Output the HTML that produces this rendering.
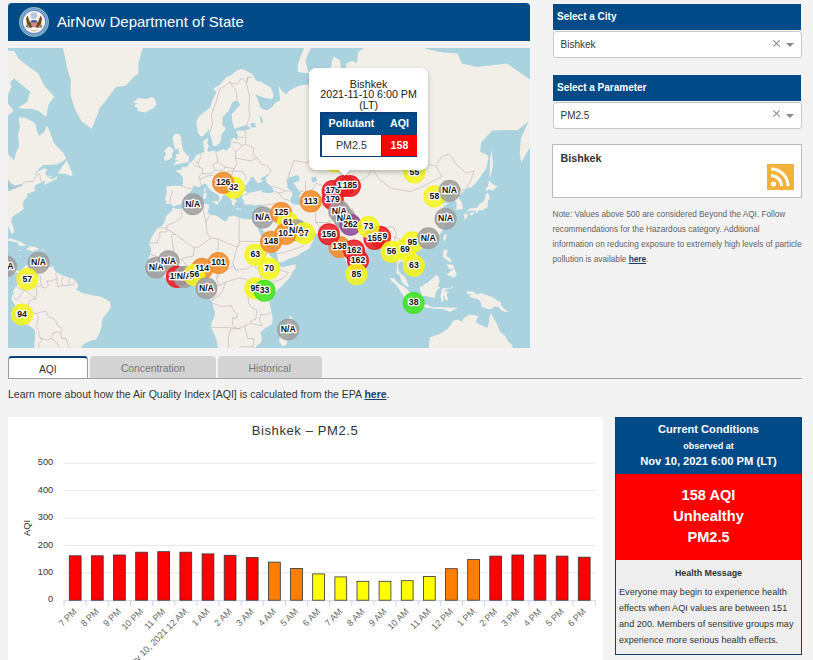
<!DOCTYPE html>
<html><head><meta charset="utf-8">
<style>
*{box-sizing:border-box}
html,body{margin:0;padding:0}
body{width:813px;height:660px;overflow:hidden;position:relative;background:#f3f3f3;font-family:"Liberation Sans",sans-serif;color:#333}
.abs{position:absolute}
#hdr{left:8px;top:3px;width:522px;height:38px;background:#004b87;border-radius:4px 4px 0 0}
#hdr .t{position:absolute;left:49px;top:10px;font-size:15px;color:#fff;white-space:nowrap}
#map{left:8px;top:48px;width:522px;height:300px;overflow:hidden;background:#aad3df}
#map svg{position:absolute;left:-8px;top:-48px}
.mk text{font:bold 8.7px "Liberation Sans",sans-serif;fill:#111;text-anchor:middle;paint-order:stroke;stroke:#fff;stroke-width:2.6px;stroke-linejoin:round}
#popup{left:309px;top:67.5px;width:119px;height:102px;background:#fff;border-radius:7px;box-shadow:0 2px 5px rgba(0,0,0,.25);text-align:center;font-size:9.8px;line-height:10.8px;color:#222}
#popup .tip{position:absolute;left:27px;top:100px;width:14px;height:14px;background:#fff;transform:rotate(45deg);box-shadow:2px 2px 3px rgba(0,0,0,.15)}
#popup table{position:absolute;left:11px;top:44.5px;width:97px;border-collapse:collapse;border:1.5px solid #0b3f7a}
#popup th{background:#004b87;color:#fff;font-weight:bold;height:22px;padding:0;font-size:9.8px}
#popup td{height:23px;padding:0;font-size:9.8px}
.selh{left:553px;width:248px;height:26px;background:#004b87;color:#fff;font-weight:bold;font-size:10px;padding:7px 0 0 4px;white-space:nowrap}
.sel{left:553px;width:249px;height:27px;background:#fff;border:1px solid #c8c8c8;border-radius:3px;font-size:10px;color:#333;padding:7px 0 0 6.5px}
.sel .x{position:absolute;left:218px;top:6.7px}
.sel .ar{position:absolute;left:232px;top:11px;width:0;height:0;border-left:4px solid transparent;border-right:4px solid transparent;border-top:4px solid #888}
#cityb{left:552px;top:144px;width:250px;height:54px;background:#fff;border:1px solid #bbb}
#note{left:552.5px;top:207px;width:252px;font-size:8.25px;line-height:15px;color:#626262}
#note b,#learn b{color:#1a3d6a;text-decoration:underline}
.tab{top:356px;height:23px;border-radius:4px 4px 0 0;text-align:center;font-size:10.3px;padding-top:7px}
#learn{left:8px;top:387.5px;font-size:10.5px;color:#333;white-space:nowrap}
#chart{left:8px;top:417px;width:595px;height:250px;background:#fff}
#chart svg{position:absolute;left:-8px;top:-417px}
.yl{font:9.2px "Liberation Sans",sans-serif;fill:#333}
.xl{font:9px "Liberation Sans",sans-serif;fill:#666}
#cc{left:615px;top:417px;width:187px;height:238px;border:1px solid #0b3f7a;background:#eee}
#cc .h{position:absolute;left:0;top:0;width:185px;height:56px;background:#004b87;color:#fff;font-weight:bold;text-align:center}
#cc .r{position:absolute;left:0;top:56px;width:185px;height:86px;background:#ff0000;color:#fff;font-weight:bold;text-align:center;font-size:14.6px;line-height:21.2px;padding-top:10.5px}
</style></head><body>
<div id="hdr" class="abs">
 <svg class="abs" style="left:10px;top:2.5px" width="32" height="32" viewBox="0 0 32 32">
  <circle cx="16" cy="16" r="15" fill="#5a86c4"/>
  <circle cx="16" cy="16" r="14.4" fill="none" stroke="#8fc7a8" stroke-width="1"/>
  <circle cx="16" cy="16" r="12.6" fill="none" stroke="#88a8d8" stroke-width="1.2"/>
  <circle cx="16" cy="16" r="11" fill="#f7f5ee"/>
  <circle cx="16" cy="9.6" r="3.4" fill="#b4c8dc"/>
  <path d="M15 19 L11.5 15 L9.5 9.5 L8 12.5 L9 18 L12 22 L15 21 Z" fill="#6f4c26"/>
  <path d="M17 19 L20.5 15 L22.5 9.5 L24 12.5 L23 18 L20 22 L17 21 Z" fill="#6f4c26"/>
  <path d="M9 18 L7.5 21 L11 22 Z" fill="#70844a"/>
  <path d="M23 18 L24.5 21 L21 22 Z" fill="#8a7a5a"/>
  <path d="M13.3 14.2 H18.7 V19.5 Q16 23 13.3 19.5 Z" fill="#d98a84"/>
  <rect x="13.3" y="14.2" width="5.4" height="2.3" fill="#3d5a9c"/>
  <path d="M12.5 24 Q16 26 19.5 24" fill="none" stroke="#c9b98a" stroke-width="1"/>
 </svg>
 <div class="t">AirNow Department of State</div>
</div>
<div id="map" class="abs">
<svg width="813" height="660" viewBox="0 0 813 660">
<g fill="#f2efe9"><polygon points="174.1,206.7 172.1,205.6 170.6,203.7 166.3,204.3 166.5,201.8 165.2,199.6 165.4,197.7 166.9,192.7 166.7,189.8 165.6,187.8 167.6,186.3 173.3,185.8 177.4,186.1 182.2,186.0 183.0,182.7 183.0,177.8 180.8,174.4 175.9,170.9 179.1,169.6 181.3,170.1 182.1,166.8 185.8,167.3 187.9,166.0 189.5,162.4 191.8,161.6 194.3,159.0 195.7,155.5 199.5,153.9 204.2,152.1 203.7,146.2 203.1,141.1 208.3,137.6 207.4,143.6 208.9,146.1 207.3,149.9 208.9,151.9 211.5,151.1 213.6,150.6 216.6,152.1 219.0,151.0 223.3,148.9 225.5,150.4 228.4,149.1 230.8,145.4 230.5,142.3 231.7,138.8 234.0,137.4 237.2,140.5 238.0,134.7 235.9,131.4 238.6,130.4 246.0,130.6 250.5,128.2 247.0,125.0 238.9,127.3 234.7,128.9 233.3,126.1 232.3,121.5 231.8,114.1 235.0,110.5 240.2,104.8 237.3,100.4 233.0,101.7 230.5,106.0 228.9,110.7 223.9,115.5 222.6,117.4 222.3,125.1 225.8,128.0 224.3,130.9 221.5,134.7 220.7,141.7 219.0,143.6 216.4,145.7 213.4,146.1 212.8,144.0 211.2,137.6 209.5,132.7 208.6,128.5 207.0,132.3 202.7,135.9 200.7,136.4 197.8,132.4 196.9,126.3 196.3,121.5 198.7,117.0 202.0,114.1 205.9,110.7 210.2,107.4 212.3,100.6 216.4,92.6 213.4,88.6 219.8,85.1 222.8,81.6 226.2,77.3 230.5,75.4 236.3,70.9 240.8,68.9 245.5,70.2 252.2,74.3 256.5,81.0 260.8,81.8 270.8,87.5 273.8,95.3 272.3,99.1 264.8,98.0 259.0,95.9 255.0,93.4 257.3,98.5 259.7,105.0 260.1,107.3 263.8,109.7 267.2,110.2 272.3,107.0 275.5,102.2 280.2,100.4 278.3,84.9 282.0,91.5 286.2,94.2 289.9,90.3 299.1,85.7 309.8,84.0 314.1,77.9 327.0,82.8 329.1,73.5 333.4,56.4 339.8,60.0 341.5,70.2 343.0,88.6 346.2,63.5 352.7,60.7 357.0,63.5 358.0,52.6 371.9,40.8 389.1,23.1 408.4,13.1 425.5,48.8 442.7,52.6 457.6,53.4 461.9,63.5 476.9,66.9 506.9,63.5 530.5,79.8 549.8,77.9 571.2,88.6 571.2,119.2 549.8,128.0 534.8,136.4 528.4,121.5 517.6,130.2 508.6,129.9 492.4,130.6 481.2,142.3 480.1,151.7 487.0,154.8 488.5,158.1 486.0,169.1 475.9,183.0 470.3,188.0 468.1,187.2 463.6,190.9 458.8,196.5 458.6,198.4 461.7,202.2 462.8,206.9 462.8,208.2 461.9,209.3 456.4,210.1 456.8,203.0 454.1,199.6 452.1,196.3 447.4,194.1 446.1,199.1 444.8,196.6 446.9,194.4 441.8,196.2 437.9,198.8 440.3,201.6 442.4,203.7 445.6,202.8 448.2,203.2 443.5,206.8 441.5,210.2 443.7,213.4 444.8,217.3 446.7,219.3 446.7,222.5 444.1,227.2 441.6,231.9 438.6,235.6 435.6,238.2 430.2,240.7 423.4,242.5 422.1,243.2 421.9,245.3 420.6,242.5 419.3,242.5 414.2,244.0 412.0,248.9 413.9,251.8 417.4,254.9 419.5,263.3 419.1,264.7 415.0,267.4 410.1,271.2 410.1,267.5 407.3,266.9 405.2,263.4 401.7,261.8 400.9,260.5 399.7,262.6 398.1,267.1 398.3,270.0 401.1,274.2 402.5,275.0 404.6,276.6 407.0,281.6 409.0,286.7 407.9,286.9 404.6,285.0 402.8,283.3 400.4,278.1 399.8,275.5 396.4,272.7 396.8,268.3 396.8,262.8 395.9,259.2 394.7,253.8 391.7,253.2 387.4,255.0 387.6,249.4 384.6,245.6 382.6,242.6 382.2,240.7 379.4,241.1 376.9,241.8 374.3,242.3 371.2,245.3 369.5,246.4 364.0,251.2 359.4,254.5 357.2,258.5 357.6,261.4 356.6,267.5 355.5,269.7 353.0,270.8 351.7,272.3 350.4,271.4 348.9,268.3 348.0,265.4 345.9,261.8 343.7,256.1 342.6,252.7 341.5,248.2 341.5,243.3 340.1,241.9 337.7,244.4 336.3,243.9 334.7,242.3 333.4,240.8 336.0,239.3 333.2,237.9 330.2,236.7 329.1,234.7 322.7,233.6 319.0,234.1 315.4,233.6 309.4,232.8 306.1,229.2 301.2,230.1 297.0,227.7 294.5,224.9 292.7,222.3 289.5,222.4 288.4,223.7 290.5,228.4 292.9,231.0 293.9,233.2 295.2,231.7 296.1,233.6 294.8,235.3 298.0,236.2 302.1,235.5 304.0,233.8 305.4,232.5 306.4,231.0 306.3,234.1 307.0,235.9 310.7,237.6 313.7,240.2 310.9,244.8 309.2,248.2 305.5,250.7 301.5,252.7 297.4,255.9 290.7,258.3 282.0,262.0 278.5,262.5 278.2,260.9 277.6,257.6 276.7,253.0 273.4,247.1 269.5,242.5 267.1,236.5 262.0,228.7 260.5,223.5 259.0,227.4 255.6,223.5 255.3,222.4 254.8,219.0 259.4,218.5 260.1,217.0 260.5,215.2 261.6,212.4 262.4,211.0 262.3,208.2 263.1,205.3 259.7,204.8 254.1,205.6 251.3,204.5 246.2,204.7 244.3,204.3 243.6,200.3 241.7,197.4 242.1,195.9 242.8,194.9 241.0,193.7 237.8,193.5 237.0,196.0 234.7,194.4 235.9,197.4 234.4,198.8 237.0,201.0 237.0,202.5 236.3,201.7 234.4,202.8 234.9,205.1 233.8,205.9 232.0,204.5 232.0,200.9 230.0,199.0 228.8,197.2 227.3,194.8 227.2,192.4 226.5,190.1 224.3,188.5 220.8,186.0 218.1,184.2 216.4,180.6 215.2,182.0 215.0,179.5 211.9,180.3 212.4,184.4 214.5,185.7 216.0,189.1 220.3,190.7 221.8,192.9 224.0,194.2 225.2,195.6 224.9,196.6 222.4,194.8 222.2,198.5 221.1,199.4 220.0,201.7 219.1,201.3 219.4,197.4 219.0,196.0 217.2,194.2 216.1,193.7 214.6,192.7 211.9,191.2 208.0,187.8 207.6,186.0 206.5,184.2 204.6,183.3 201.2,185.4 198.3,187.2 197.1,186.6 193.9,185.8 192.0,188.3 192.6,189.5 190.2,192.1 187.5,194.1 184.8,197.6 184.5,200.6 183.4,202.6 180.3,204.8 176.1,205.1"/><polygon points="173.3,165.4 178.1,164.0 188.3,161.9 189.2,156.7 186.2,153.9 182.8,149.5 182.1,145.7 181.1,139.7 181.7,138.0 179.1,133.9 174.8,133.9 172.3,138.4 173.6,143.1 175.1,149.5 178.5,148.8 179.1,153.9 175.7,154.2 176.6,157.8 174.2,159.2 179.1,160.9 175.9,161.6"/><polygon points="169.7,146.5 173.6,149.9 172.2,154.0 171.8,158.1 167.3,160.2 164.6,160.7 163.7,158.1 166.3,154.2 164.1,151.0 167.8,147.3"/><polygon points="214.2,201.3 212.3,201.6 212.1,202.1 216.0,204.0 217.9,205.1 218.3,202.9 218.9,201.0"/><polygon points="203.5,192.9 205.9,192.7 206.5,194.6 206.1,198.3 203.5,199.1 203.5,194.6"/><polygon points="205.7,187.5 206.0,190.1 205.3,192.1 204.0,190.9 204.0,189.2"/><polygon points="235.9,208.2 241.9,208.9 241.3,209.6 238.0,209.6 235.9,209.0"/><polygon points="254.8,209.6 259.7,208.0 258.4,209.8 256.3,210.6"/><polygon points="357.0,268.6 359.6,271.2 360.8,274.7 358.2,277.0 357.4,276.7 356.6,274.9 356.5,272.3"/><polygon points="446.0,233.6 446.7,236.7 444.4,241.6 443.1,239.0 444.1,235.5"/><polygon points="421.2,245.7 423.4,246.9 420.2,250.0 418.2,247.8"/><polygon points="489.1,180.3 491.9,183.6 497.5,186.6 492.5,190.7 488.7,188.9 487.0,191.1 485.5,188.9 487.6,186.9"/><polygon points="487.4,192.7 488.9,194.9 489.8,198.3 487.9,200.9 487.3,207.7 485.1,208.8 483.8,209.0 482.9,210.6 478.9,209.8 476.5,213.6 475.2,210.6 469.3,211.1 466.0,212.3 468.1,210.3 470.5,208.2 476.9,207.9 479.1,204.3 483.4,201.8 485.5,196.9 485.5,194.1"/><polygon points="469.4,213.4 474.1,211.6 473.1,214.2 470.5,215.5"/><polygon points="464.9,213.2 467.5,214.1 467.1,217.5 465.3,219.8 464.5,218.3 463.8,215.4"/><polygon points="491.3,150.2 492.6,158.8 493.0,165.6 491.1,173.8 490.9,178.4 489.6,175.3 490.0,160.5"/><polygon points="534.8,119.2 528.4,121.5 520.9,138.4 519.8,153.5 521.2,162.6 525.5,155.3 528.4,149.9 534.8,142.3 533.7,136.4 539.1,128.0"/><polygon points="443.9,249.4 447.4,249.4 447.4,252.3 446.1,255.6 451.2,259.8 451.2,262.5 449.1,261.6 446.3,259.4 444.7,258.1 443.9,258.7 442.7,255.0 443.3,252.7"/><polygon points="446.9,274.7 450.4,271.2 454.6,268.6 456.6,274.7 454.2,277.7 451.6,276.8"/><polygon points="446.7,264.0 453.4,264.9 454.4,268.2 450.1,269.7 448.0,267.1"/><polygon points="436.0,274.7 438.6,277.1 439.7,280.6 437.9,286.5 440.5,287.6 437.3,289.7 435.8,292.4 434.7,298.1 431.1,297.2 427.7,296.6 421.9,295.9 421.2,291.8 419.7,289.7 420.4,285.6 422.0,286.4 424.0,284.6 427.7,282.8 429.8,280.3 431.9,279.0 434.3,276.9"/><polygon points="389.7,277.8 394.4,278.5 397.0,282.0 399.8,284.3 402.9,286.1 406.2,288.6 409.4,291.8 412.7,296.1 412.2,302.4 409.4,302.4 404.6,297.8 400.5,291.7 397.2,285.9 391.4,280.8"/><polygon points="410.9,304.3 412.4,302.6 414.4,302.8 418.1,304.1 422.1,304.6 427.1,304.5 430.7,306.5 430.7,308.2 425.5,307.5 422.3,307.1 413.7,305.6"/><polygon points="430.9,307.3 440.5,307.1 449.1,307.5 453.6,307.8 458.3,307.8 453.4,310.1 450.1,312.1 442.7,309.1 434.1,308.8 431.3,308.6"/><polygon points="441.6,290.8 442.7,288.0 449.1,288.4 453.0,286.5 453.4,288.0 445.9,289.5 444.1,291.6 449.7,291.6 446.7,293.6 448.0,300.4 444.8,299.4 444.8,295.5 443.3,295.9 443.7,301.5 441.4,301.5 440.5,296.6"/><polygon points="466.2,292.5 466.8,291.6 472.9,291.5 476.9,294.4 480.8,292.9 487.0,295.2 493.0,297.2 497.9,300.9 501.6,302.6 500.5,304.1 503.1,308.0 508.0,311.9 504.8,311.9 500.9,310.0 498.4,307.1 494.1,306.5 491.9,309.1 487.6,309.3 486.4,308.0 482.3,307.5 480.8,302.6 478.9,299.6 473.7,298.3 469.0,295.9 471.6,294.6 468.4,294.2"/><polygon points="490.9,312.8 493.0,317.1 495.1,320.7 496.7,323.3 497.9,326.4 500.1,331.7 505.2,336.1 508.0,341.3 512.0,344.7 513.6,350.8 514.4,369.8 431.9,369.8 429.0,344.8 429.8,337.6 439.7,334.1 447.4,328.9 450.4,325.3 453.4,320.7 457.6,319.6 461.9,321.8 464.3,317.8 465.9,316.6 469.6,314.5 478.6,316.0 476.7,319.1 475.9,322.2 483.4,326.2 487.3,327.8 488.9,322.2 489.5,317.0"/><polygon points="291.1,315.5 293.7,323.3 291.4,329.3 288.0,339.2 286.2,345.0 282.4,346.2 279.1,341.2 280.5,334.1 280.9,326.7 284.7,323.8 288.4,318.9"/><polygon points="173.1,207.5 170.9,212.2 169.3,213.2 165.7,216.5 165.0,221.3 161.8,226.1 157.9,227.3 156.6,229.3 151.4,237.4 149.0,244.1 150.6,247.1 151.3,250.3 150.2,255.0 148.1,257.9 150.0,260.6 149.8,262.9 152.1,264.1 154.5,266.4 156.2,269.3 157.2,271.4 160.9,274.7 162.4,276.2 169.5,280.4 177.0,278.3 181.1,279.5 185.1,277.8 188.2,276.5 192.8,275.9 196.3,277.7 198.4,280.5 200.5,280.3 203.3,279.2 206.3,281.1 206.5,285.7 205.8,288.8 204.4,291.2 207.0,296.1 210.9,300.0 212.0,302.8 213.9,308.6 215.1,313.4 214.3,316.9 211.6,322.7 210.8,327.3 214.5,334.6 216.6,340.2 218.0,349.0 220.8,353.7 255.4,352.2 255.4,347.3 261.4,342.3 261.6,335.7 260.2,333.1 264.6,328.6 271.0,324.9 272.7,321.2 272.3,315.6 271.7,311.9 269.8,304.3 269.3,300.6 270.5,298.4 271.5,296.6 274.5,293.6 276.7,290.4 282.7,285.3 286.2,281.1 289.5,278.2 292.2,272.5 294.4,269.3 295.7,267.3 295.4,264.2 291.0,265.3 286.2,266.2 282.0,267.2 278.0,264.7 278.3,262.9 277.0,261.6 274.5,258.3 270.1,255.9 268.0,250.5 265.3,246.9 263.8,242.5 261.6,236.7 258.0,229.0 255.3,222.4 254.8,219.0 253.7,218.8 249.6,219.3 243.8,218.9 236.9,217.0 234.0,215.4 228.5,217.0 226.3,221.5 221.1,219.3 217.9,216.3 213.8,215.0 211.5,214.9 207.2,212.4 208.6,210.2 208.7,207.6 209.2,204.1 207.4,204.8 206.7,203.5 202.2,204.5 200.3,204.5 196.5,204.9 192.1,204.9 188.3,205.6 184.3,207.7 179.3,209.0 177.2,208.9 174.1,208.0"/><polygon points="-28.7,-9.4 -7.3,49.6 14.2,51.1 18.5,58.5 29.1,66.9 38.6,73.8 44.1,85.7 54.4,96.4 48.4,104.8 46.3,116.9 38.8,111.0 31.3,108.8 21.6,108.8 18.4,107.3 27.0,102.2 30.2,91.5 22.7,85.7 14.2,78.5 5.6,85.7 1.3,94.2 1.3,128.0 8.8,155.3 14.2,160.5 16.3,151.7 19.0,146.9 18.2,134.5 19.9,128.0 18.6,117.4 24.9,117.8 31.3,121.0 35.6,123.7 36.6,130.2 39.0,135.9 44.1,132.3 46.3,126.7 47.6,126.3 51.6,136.4 53.4,142.1 56.6,146.3 63.4,152.8 66.2,158.5 63.2,160.9 57.0,164.6 43.3,165.0 39.5,168.3 33.4,175.3 35.6,173.8 38.8,170.7 44.1,168.6 47.4,169.4 45.2,172.2 46.3,175.3 48.4,177.5 52.7,179.4 57.0,176.3 57.4,178.4 49.3,182.6 43.9,185.0 45.2,180.6 47.4,180.6 44.0,180.7 42.0,182.1 35.0,185.5 34.1,188.6 35.6,190.9 32.4,192.1 27.0,194.1 27.0,196.9 25.1,199.0 23.8,200.2 22.7,204.3 23.8,208.9 21.6,210.6 18.6,212.4 14.4,215.2 12.0,217.3 11.2,221.5 12.9,226.1 14.2,230.3 13.7,232.5 11.6,234.1 10.1,230.5 8.6,227.3 7.7,224.5 5.6,222.3 -7.3,222.3 -28.7,222.3"/><polygon points="57.6,173.4 66.6,160.2 72.6,173.8 70.9,176.3 65.6,173.8"/><polygon points="50.6,175.6 52.7,177.2 47.6,176.6"/><polygon points="29.1,13.1 142.7,-36.9 147.0,32.2 138.4,63.5 138.4,73.5 134.1,76.7 125.6,85.7 115.9,86.9 105.0,101.7 99.9,107.3 95.6,119.2 91.5,129.1 88.1,125.9 81.6,121.5 74.8,108.8 72.0,99.6 70.5,94.5 70.9,79.8 67.7,70.2 65.1,57.8 61.3,40.8 44.1,27.7 29.1,13.1"/><polygon points="138.6,109.0 134.1,105.8 137.3,103.2 133.1,102.2 138.4,98.0 146.8,99.1 151.3,96.9 154.5,98.5 156.6,104.3 153.4,108.3 144.8,112.6 136.9,110.7"/><polygon points="3.5,241.7 9.0,238.7 11.6,238.6 19.5,241.4 26.7,245.4 23.1,246.1 19.1,246.3 17.4,242.5 13.1,241.8 9.9,240.9 5.6,241.4"/><polygon points="26.0,249.5 29.6,246.2 35.6,246.9 39.2,249.1 32.6,251.4 29.1,250.0"/><polygon points="17.7,249.9 22.3,250.3 20.6,250.9"/><polygon points="41.6,249.6 45.0,249.8 44.6,250.5 41.6,250.5"/><polygon points="-7.3,246.0 -0.8,242.5 -1.9,250.5 -4.1,255.4 5.6,255.2 7.1,257.2 6.2,266.2 7.7,268.2 9.4,269.6 14.4,269.6 15.2,270.3 19.7,271.0 21.2,272.3 23.8,267.3 25.3,266.0 26.6,265.4 31.4,262.8 32.1,265.5 35.6,263.4 39.9,267.1 42.2,266.9 48.0,267.2 52.7,266.6 55.3,271.2 61.0,275.1 67.3,277.1 73.5,279.1 75.6,280.7 78.4,285.4 76.2,289.6 81.6,292.8 90.6,295.1 97.7,295.9 103.1,297.6 110.1,302.1 110.8,307.0 109.1,310.5 103.1,317.7 101.9,321.8 101.9,325.4 100.7,328.9 99.2,334.1 95.6,340.1 93.0,340.1 86.2,342.6 81.6,346.2 81.6,352.2 33.9,352.2 33.9,350.1 34.5,346.0 34.7,341.9 35.3,333.9 34.9,330.0 29.8,326.0 24.4,323.1 22.3,319.3 20.4,315.7 16.2,307.1 14.5,304.2 11.4,299.6 12.2,294.4 14.4,294.4 12.7,291.7 14.9,287.7 16.7,285.8 20.4,281.3 19.7,275.7 17.4,272.5 14.2,273.6 12.0,272.5 5.6,270.3 1.3,266.0 -7.3,260.5"/><polygon points="298.0,72.2 297.6,66.9 299.1,60.0 302.3,52.6 305.5,44.9 309.8,36.6 318.4,30.4 331.2,23.1 333.4,27.7 322.7,35.7 314.1,42.4 308.7,52.6 305.5,60.0 307.7,70.2 310.9,73.5 303.4,72.8"/><polygon points="310.9,74.8 315.2,76.7 312.0,78.5"/><polygon points="-0.8,102.2 5.6,100.1 10.9,107.3 13.7,111.2 7.7,115.5 1.3,111.2"/><polygon points="-7.3,73.5 1.3,76.7 9.9,79.8 11.4,86.9 6.7,96.9 1.3,98.5 -7.3,99.6"/></g>
<g fill="#aad3df"><polygon points="247.8,192.7 244.5,188.9 245.3,186.9 246.9,183.9 249.2,180.9 251.3,176.9 253.7,176.9 255.2,180.3 257.3,182.7 259.0,183.3 261.6,181.5 263.8,180.4 261.6,180.3 260.5,178.4 267.0,174.7 269.5,174.7 265.9,177.5 266.5,182.4 270.6,185.7 274.7,191.4 270.6,193.2 263.3,192.4 260.9,190.3 253.7,191.9 249.0,192.7"/><polygon points="288.2,179.1 289.5,177.2 292.7,176.6 296.7,175.0 299.1,176.0 299.3,180.6 293.3,183.0 295.2,185.5 298.5,190.4 301.2,193.2 299.1,196.0 301.0,199.4 301.2,203.5 301.0,204.5 294.8,204.8 291.6,202.9 290.2,199.5 292.5,194.9 291.6,191.8 287.3,187.5 287.3,183.0 286.2,181.5"/><polygon points="242.8,194.9 247.7,192.9 248.8,194.1 244.5,195.2"/><polygon points="249.8,123.7 255.2,122.8 255.6,127.2 251.3,127.6"/><polygon points="259.5,116.0 261.6,116.9 263.1,122.3 261.0,123.2"/><polygon points="310.9,177.8 316.2,176.6 316.9,180.9 313.0,183.0"/><polygon points="343.0,176.6 354.8,176.9 353.7,178.4 344.1,178.8"/><polygon points="408.4,159.9 411.6,157.8 420.2,145.4 421.2,146.5 414.4,157.1 409.4,160.9"/><polygon points="8.8,191.2 16.3,187.8 22.3,186.0 22.1,183.9 15.2,185.7 8.8,181.5 5.6,178.4 5.6,191.8"/><polygon points="253.7,291.8 258.4,292.3 258.0,295.1 254.1,295.9"/></g>
<g fill="none" stroke="#a8949f" stroke-opacity="0.55" stroke-width="0.75" stroke-linejoin="round"><polyline points="6.7,177.8 9.0,180.6 8.8,187.5 16.3,188.0 15.9,186.3 21.6,184.5 25.5,181.5 32.4,181.5 34.9,178.8 37.3,174.1 39.9,174.2 40.3,179.4 42.0,182.1"/><polyline points="19.7,271.0 18.6,274.2 20.1,272.7"/><polyline points="32.8,264.2 30.4,266.0 30.2,271.4 30.4,273.8 35.6,274.7 40.9,276.4 40.3,280.0 41.4,284.3 40.3,285.4 36.0,287.3 36.9,292.3 35.6,298.7 29.6,300.9 28.1,305.4 27.0,305.8 29.1,309.9 34.5,313.4 36.6,313.4"/><polyline points="57.0,271.4 55.5,274.0 57.0,278.5 51.0,281.1 46.9,280.9 48.4,285.4 45.2,288.0 42.0,287.1 41.4,284.3"/><polyline points="63.0,276.8 63.0,277.9 61.3,281.1 62.4,285.4 58.1,286.9 57.4,284.3 57.0,278.5"/><polyline points="69.9,277.5 68.8,281.1 69.9,285.0 65.8,285.6 62.4,285.4"/><polyline points="75.0,280.7 73.1,284.6 69.9,285.0"/><polyline points="13.5,297.0 16.3,300.4 19.5,296.8 24.2,289.9 19.7,288.8 16.7,286.7"/><polyline points="24.2,289.9 28.1,292.3 35.6,298.7"/><polyline points="36.6,313.4 38.4,316.7 37.1,323.3 36.6,327.8 38.8,331.2 39.4,336.9 42.0,340.4 38.8,343.9 38.6,352.2"/><polyline points="36.6,313.4 45.6,310.8 48.4,316.7 53.8,318.9 56.6,322.2 57.0,325.1 60.9,327.3 61.9,329.4 60.9,333.4 61.5,338.3 66.0,338.7 68.6,346.5 70.3,350.1 66.2,352.2"/><polyline points="40.1,338.0 47.6,339.9 51.4,338.5 53.4,332.5 59.1,331.9 60.9,333.4"/><polyline points="51.4,338.5 57.0,342.7 60.9,350.5"/><polyline points="181.8,209.3 181.7,217.0 177.6,220.0 174.2,222.5 166.9,225.5 166.9,227.9 157.3,227.9"/><polyline points="166.9,227.9 166.9,232.0 159.8,232.0 159.8,238.1 157.5,239.5 157.7,243.0 149.1,243.0"/><polyline points="166.9,228.9 175.3,234.4 171.6,234.4 173.8,253.8 173.8,256.1 161.1,256.3 159.4,257.6 150.4,254.3"/><polyline points="175.3,234.4 188.1,243.7 194.1,247.8 198.0,247.3 211.0,237.9"/><polyline points="203.5,204.5 203.3,210.9 205.9,221.8 207.0,233.6 211.0,237.9"/><polyline points="210.2,214.2 205.9,221.8"/><polyline points="211.0,237.9 217.7,239.0 237.0,247.1"/><polyline points="239.3,218.3 239.1,241.4 264.6,241.4"/><polyline points="239.1,241.4 239.1,246.0 237.0,246.0 237.0,247.1 234.0,259.4 232.7,262.7 235.9,270.3 232.7,266.0 226.3,270.3 219.8,273.6 216.6,279.0 219.8,285.4 225.4,282.2 234.6,279.4 239.1,277.9 244.3,279.0 247.7,280.3 251.5,282.2 252.4,281.6 257.3,281.6 261.6,279.0 258.4,268.6 259.0,266.9 263.8,258.7 268.0,250.5"/><polyline points="235.9,270.3 241.3,269.3 247.7,268.8 254.1,263.8 256.3,268.2 258.4,268.6"/><polyline points="217.7,239.0 218.8,246.0 214.7,260.1 216.6,263.8 219.0,268.2 216.6,279.0"/><polyline points="193.3,264.5 200.5,260.5 207.0,261.2 214.7,260.1"/><polyline points="193.3,264.5 191.5,270.3 191.3,276.2"/><polyline points="194.1,247.8 193.3,256.1 186.0,257.4 181.3,259.0 179.1,260.3 176.1,262.7 173.8,267.3 168.4,267.7 167.3,273.2 169.5,280.3"/><polyline points="181.3,259.0 187.5,266.0 188.5,269.5 189.0,276.4"/><polyline points="179.1,266.0 179.8,270.3 178.7,278.5"/><polyline points="159.4,257.6 160.9,262.9 156.2,262.3 153.4,262.3 149.8,262.9"/><polyline points="160.9,262.9 167.3,265.1 168.4,267.7 162.6,270.3 160.9,274.7"/><polyline points="157.5,262.5 149.6,260.3"/><polyline points="203.8,280.0 204.8,276.8 210.2,274.7 214.7,267.7 216.6,263.8"/><polyline points="206.5,285.0 209.8,285.0 219.8,285.4"/><polyline points="209.8,285.0 209.8,287.6 205.9,287.6 209.8,287.6 216.6,294.8 211.7,300.4"/><polyline points="211.7,301.5 213.4,299.6 219.8,295.1 223.0,289.7 225.4,282.2"/><polyline points="211.7,302.6 220.9,306.5 231.6,305.8 232.5,309.5 237.0,313.4 237.0,317.8 232.7,317.8 232.7,325.1 235.7,328.0"/><polyline points="210.8,327.3 225.2,327.6 235.7,328.0 239.8,328.5 244.5,325.8 250.7,323.5 250.7,320.7 255.8,319.3 256.9,310.1 251.3,307.3 248.5,302.6 248.1,296.1 249.0,292.7 251.5,291.8 258.2,291.8 258.4,287.6 260.5,280.0"/><polyline points="258.2,291.8 266.1,297.0 269.5,299.8"/><polyline points="273.4,281.1 273.4,293.3"/><polyline points="273.4,281.1 275.5,281.1 282.0,279.0 288.4,272.5 278.3,269.5 277.2,266.0"/><polyline points="263.8,258.7 268.0,251.6 277.7,261.8"/><polyline points="272.1,312.3 265.9,314.7 260.5,314.5 259.5,320.0 262.3,325.8 250.7,323.5"/><polyline points="228.4,338.0 228.4,352.2"/><polyline points="228.4,338.0 230.5,329.1 239.8,328.5"/><polyline points="244.5,325.8 247.7,338.5 254.1,338.7 252.6,346.7"/><polyline points="256.0,349.6 252.6,346.7 240.2,346.9 234.8,352.2"/><polyline points="263.1,205.3 275.5,203.7 281.5,203.7 283.0,207.2 284.1,214.7 288.0,217.8 289.5,222.5"/><polyline points="275.5,203.7 273.8,210.9 269.1,217.3 264.4,216.5 262.0,215.5"/><polyline points="269.1,217.3 275.5,219.5 281.3,224.2 287.3,224.7"/><polyline points="263.8,223.5 264.8,221.0 269.1,217.3"/><polyline points="277.2,253.8 285.2,252.1 297.0,248.2 303.4,246.0 304.9,241.4 304.5,237.4 306.2,234.6"/><polyline points="294.8,235.3 303.4,239.7 304.9,241.4"/><polyline points="281.5,196.9 284.1,199.1 288.4,200.2 290.3,200.5"/><polyline points="301.0,203.5 307.7,201.6 313.0,202.9 316.2,205.6 316.7,208.0 315.2,212.9 315.8,222.5 319.5,226.4 320.5,230.5 317.5,233.9"/><polyline points="315.8,222.5 328.0,222.5 334.5,218.5 337.7,212.2 339.0,205.6 345.2,204.3"/><polyline points="316.7,208.0 322.7,204.0 330.8,203.7 336.6,200.5 338.7,204.3 345.2,204.3"/><polyline points="331.7,237.4 337.7,235.5 337.7,228.4 345.2,219.8 346.9,216.0 345.2,210.9 352.2,208.2"/><polyline points="352.2,208.2 354.8,214.7 359.1,221.8 365.5,225.7 374.3,227.4 382.7,227.7 393.4,226.7"/><polyline points="374.3,230.8 377.9,232.0 383.7,234.4 383.3,243.7"/><polyline points="393.4,226.7 396.6,234.4 394.4,236.7 403.0,240.9 407.3,239.7 414.2,240.2 416.9,242.5"/><polyline points="403.0,240.9 400.0,245.0 403.0,250.7 411.2,255.2 410.7,258.7 404.9,260.3 406.0,264.2"/><polyline points="403.0,240.9 404.3,242.5 408.4,246.0 412.2,251.6 415.9,257.6 412.7,267.1"/><polyline points="394.4,236.7 395.5,244.8 398.3,250.5 396.6,255.0 398.7,266.0"/><polyline points="287.3,180.0 293.7,160.5 303.4,162.3 316.2,162.9 316.2,152.4 333.4,146.5 349.5,151.7 357.0,162.9 365.5,162.9 371.9,168.6"/><polyline points="371.9,168.6 382.7,162.9 395.5,158.8 404.1,164.6 416.9,167.6 429.8,164.6 435.6,166.0"/><polyline points="371.9,168.6 379.4,179.4 391.2,188.3 410.5,191.5 423.4,186.3 430.9,182.1 442.2,176.6 435.6,166.0"/><polyline points="435.6,166.0 442.2,156.4 449.1,153.9 457.6,165.6 466.2,173.1 474.1,171.2 470.5,181.5 466.2,187.5 465.4,188.9"/><polyline points="465.4,188.9 459.8,190.4 455.5,193.2 452.1,196.3"/><polyline points="371.9,168.6 368.7,175.3 362.3,180.0 357.6,181.5 357.4,189.8 346.2,194.6 343.0,197.4 345.2,204.3"/><polyline points="305.5,181.5 305.5,192.4 312.0,189.5 316.2,183.3 322.7,185.7 328.0,190.4 333.4,192.1 337.7,188.0 344.1,186.9 357.4,189.8"/><polyline points="299.1,190.4 305.5,192.4"/><polyline points="312.0,189.5 317.3,193.2 323.7,198.8 328.0,203.2"/><polyline points="181.7,186.4 192.4,189.1"/><polyline points="170.6,190.4 172.3,191.5 170.6,196.9 169.7,203.7"/><polyline points="191.0,161.9 194.5,165.6 199.3,167.3 203.1,168.9 201.8,173.4 198.6,177.5 200.5,178.8 199.7,181.2 201.6,185.1"/><polyline points="194.5,160.9 198.0,162.9 198.6,165.3 199.3,167.3"/><polyline points="200.5,154.2 200.1,158.8 198.4,163.3"/><polyline points="201.8,173.4 208.0,173.8 212.3,173.1 213.4,171.2 215.5,170.2 221.8,170.2 222.2,172.8 220.9,176.9"/><polyline points="200.5,178.8 208.0,176.0 212.3,175.3 214.9,176.9 214.7,180.0"/><polyline points="205.0,148.8 204.0,148.4"/><polyline points="216.0,152.1 216.8,156.7 217.7,162.3 212.3,164.6 215.5,170.2"/><polyline points="217.7,162.3 225.8,167.3 234.0,168.6 237.0,164.0 235.3,157.8 235.9,151.7 231.6,146.9"/><polyline points="221.8,170.2 225.8,167.3"/><polyline points="222.2,172.8 233.1,170.9 234.0,168.6"/><polyline points="233.1,170.9 242.3,171.5 246.0,177.2 246.0,180.0"/><polyline points="220.9,176.9 225.8,178.8 230.5,177.5 233.1,170.9"/><polyline points="230.5,177.5 234.2,182.7 239.1,185.4 246.6,185.4"/><polyline points="234.2,182.7 233.5,189.5 234.6,192.4 241.9,191.2 245.5,190.4"/><polyline points="226.7,180.6 227.1,184.5 227.5,186.9 228.8,188.9 230.5,189.8 233.5,189.5"/><polyline points="214.7,180.0 219.2,177.5 220.9,176.9"/><polyline points="219.2,177.5 218.8,180.6 222.0,180.9 226.7,180.6"/><polyline points="228.4,188.6 229.7,192.9 230.3,195.2 228.4,196.9"/><polyline points="230.3,195.2 234.8,192.4 241.3,193.2 242.1,190.9 245.5,190.4"/><polyline points="235.9,151.7 242.5,145.4 245.5,144.2 246.0,138.4 244.9,130.6"/><polyline points="230.5,142.3 237.0,142.7 242.5,145.4"/><polyline points="237.6,136.8 244.5,138.0"/><polyline points="245.5,144.2 253.7,148.0 253.0,155.3 257.3,157.8 261.6,164.3 267.4,166.0 271.2,171.5 267.6,175.0"/><polyline points="235.3,157.8 241.3,159.2 251.1,160.9 257.3,157.8"/><polyline points="246.0,125.9 249.8,116.9 248.8,108.8 249.8,96.9 247.7,88.6 246.6,82.8 247.7,77.3"/><polyline points="210.0,132.3 212.3,123.7 211.3,114.5 216.0,102.2 219.8,88.6 225.8,85.7 229.5,82.2"/><polyline points="237.0,100.6 236.1,90.3 229.5,82.2 237.0,84.6 241.3,77.9 246.6,82.8 247.7,77.3 251.5,77.9"/><polyline points="271.7,186.0 278.7,188.0 285.2,190.9 289.5,190.9"/><polyline points="274.7,191.5 278.7,192.9 282.0,192.7 285.2,190.9"/><polyline points="281.5,196.9 279.0,193.5 278.7,192.9"/><polyline points="174.1,206.5 174.1,206.7"/></g>
<g class="mk"><circle cx="335" cy="161.5" r="10.4" fill="#f4f41c" fill-opacity="0.86" stroke="#f4f41c" stroke-opacity="0.9" stroke-width="1.3"/><circle cx="6" cy="266.5" r="10.4" fill="#9e9e9e" fill-opacity="0.86" stroke="#9e9e9e" stroke-opacity="0.9" stroke-width="1.3"/><circle cx="38.6" cy="262.7" r="10.4" fill="#9e9e9e" fill-opacity="0.86" stroke="#9e9e9e" stroke-opacity="0.9" stroke-width="1.3"/><circle cx="27.3" cy="279.1" r="10.4" fill="#f4f41c" fill-opacity="0.86" stroke="#f4f41c" stroke-opacity="0.9" stroke-width="1.3"/><circle cx="22" cy="314.5" r="10.4" fill="#f4f41c" fill-opacity="0.86" stroke="#f4f41c" stroke-opacity="0.9" stroke-width="1.3"/><circle cx="192.8" cy="204.3" r="10.4" fill="#9e9e9e" fill-opacity="0.86" stroke="#9e9e9e" stroke-opacity="0.9" stroke-width="1.3"/><circle cx="233.6" cy="187.6" r="10.4" fill="#f4f41c" fill-opacity="0.86" stroke="#f4f41c" stroke-opacity="0.9" stroke-width="1.3"/><circle cx="223.2" cy="182.8" r="10.4" fill="#f28c28" fill-opacity="0.86" stroke="#f28c28" stroke-opacity="0.9" stroke-width="1.3"/><circle cx="156.2" cy="267.7" r="10.4" fill="#9e9e9e" fill-opacity="0.86" stroke="#9e9e9e" stroke-opacity="0.9" stroke-width="1.3"/><circle cx="168.6" cy="261.2" r="10.4" fill="#9e9e9e" fill-opacity="0.86" stroke="#9e9e9e" stroke-opacity="0.9" stroke-width="1.3"/><circle cx="176.9" cy="276.9" r="10.4" fill="#ea1c22" fill-opacity="0.86" stroke="#ea1c22" stroke-opacity="0.9" stroke-width="1.3"/><circle cx="184.3" cy="276.9" r="10.4" fill="#9e9e9e" fill-opacity="0.86" stroke="#9e9e9e" stroke-opacity="0.9" stroke-width="1.3"/><circle cx="202" cy="268.9" r="10.4" fill="#f28c28" fill-opacity="0.86" stroke="#f28c28" stroke-opacity="0.9" stroke-width="1.3"/><circle cx="194.4" cy="275" r="10.4" fill="#f4f41c" fill-opacity="0.86" stroke="#f4f41c" stroke-opacity="0.9" stroke-width="1.3"/><circle cx="218.4" cy="263" r="10.4" fill="#f28c28" fill-opacity="0.86" stroke="#f28c28" stroke-opacity="0.9" stroke-width="1.3"/><circle cx="206.4" cy="288.3" r="10.4" fill="#9e9e9e" fill-opacity="0.86" stroke="#9e9e9e" stroke-opacity="0.9" stroke-width="1.3"/><circle cx="255.3" cy="254.8" r="10.4" fill="#f4f41c" fill-opacity="0.86" stroke="#f4f41c" stroke-opacity="0.9" stroke-width="1.3"/><circle cx="269.2" cy="268.6" r="10.4" fill="#f4f41c" fill-opacity="0.86" stroke="#f4f41c" stroke-opacity="0.9" stroke-width="1.3"/><circle cx="255.3" cy="288.3" r="10.4" fill="#f4f41c" fill-opacity="0.86" stroke="#f4f41c" stroke-opacity="0.9" stroke-width="1.3"/><circle cx="264.5" cy="290.7" r="10.4" fill="#3ee41e" fill-opacity="0.86" stroke="#3ee41e" stroke-opacity="0.9" stroke-width="1.3"/><circle cx="288.2" cy="329.5" r="10.4" fill="#9e9e9e" fill-opacity="0.86" stroke="#9e9e9e" stroke-opacity="0.9" stroke-width="1.3"/><circle cx="262.8" cy="217.4" r="10.4" fill="#9e9e9e" fill-opacity="0.86" stroke="#9e9e9e" stroke-opacity="0.9" stroke-width="1.3"/><circle cx="281.2" cy="213" r="10.4" fill="#f28c28" fill-opacity="0.86" stroke="#f28c28" stroke-opacity="0.9" stroke-width="1.3"/><circle cx="271" cy="241.8" r="10.4" fill="#f28c28" fill-opacity="0.86" stroke="#f28c28" stroke-opacity="0.9" stroke-width="1.3"/><circle cx="288" cy="222.9" r="10.4" fill="#f4f41c" fill-opacity="0.86" stroke="#f4f41c" stroke-opacity="0.9" stroke-width="1.3"/><circle cx="296.6" cy="230.3" r="10.4" fill="#9e9e9e" fill-opacity="0.86" stroke="#9e9e9e" stroke-opacity="0.9" stroke-width="1.3"/><circle cx="304" cy="233.3" r="10.4" fill="#f4f41c" fill-opacity="0.86" stroke="#f4f41c" stroke-opacity="0.9" stroke-width="1.3"/><circle cx="285.5" cy="234" r="10.4" fill="#f28c28" fill-opacity="0.86" stroke="#f28c28" stroke-opacity="0.9" stroke-width="1.3"/><circle cx="310.7" cy="201.4" r="10.4" fill="#f28c28" fill-opacity="0.86" stroke="#f28c28" stroke-opacity="0.9" stroke-width="1.3"/><circle cx="332.7" cy="191" r="10.4" fill="#ea1c22" fill-opacity="0.86" stroke="#ea1c22" stroke-opacity="0.9" stroke-width="1.3"/><circle cx="332.7" cy="199.3" r="10.4" fill="#ea1c22" fill-opacity="0.86" stroke="#ea1c22" stroke-opacity="0.9" stroke-width="1.3"/><circle cx="344" cy="186" r="10.4" fill="#ea1c22" fill-opacity="0.86" stroke="#ea1c22" stroke-opacity="0.9" stroke-width="1.3"/><circle cx="349.9" cy="186" r="10.4" fill="#ea1c22" fill-opacity="0.86" stroke="#ea1c22" stroke-opacity="0.9" stroke-width="1.3"/><circle cx="339.3" cy="211.5" r="10.4" fill="#9e9e9e" fill-opacity="0.86" stroke="#9e9e9e" stroke-opacity="0.9" stroke-width="1.3"/><circle cx="344.3" cy="218.2" r="10.4" fill="#9e9e9e" fill-opacity="0.86" stroke="#9e9e9e" stroke-opacity="0.9" stroke-width="1.3"/><circle cx="350.4" cy="224.8" r="10.4" fill="#934696" fill-opacity="0.86" stroke="#934696" stroke-opacity="0.9" stroke-width="1.3"/><circle cx="339.6" cy="247" r="10.4" fill="#f28c28" fill-opacity="0.86" stroke="#f28c28" stroke-opacity="0.9" stroke-width="1.3"/><circle cx="328.9" cy="234.2" r="10.4" fill="#ea1c22" fill-opacity="0.86" stroke="#ea1c22" stroke-opacity="0.9" stroke-width="1.3"/><circle cx="354" cy="250.5" r="10.4" fill="#ea1c22" fill-opacity="0.86" stroke="#ea1c22" stroke-opacity="0.9" stroke-width="1.3"/><circle cx="358" cy="260.6" r="10.4" fill="#ea1c22" fill-opacity="0.86" stroke="#ea1c22" stroke-opacity="0.9" stroke-width="1.3"/><circle cx="356.4" cy="274.2" r="10.4" fill="#f4f41c" fill-opacity="0.86" stroke="#f4f41c" stroke-opacity="0.9" stroke-width="1.3"/><circle cx="380" cy="236.9" r="10.4" fill="#ea1c22" fill-opacity="0.86" stroke="#ea1c22" stroke-opacity="0.9" stroke-width="1.3"/><circle cx="374.5" cy="239" r="10.4" fill="#ea1c22" fill-opacity="0.86" stroke="#ea1c22" stroke-opacity="0.9" stroke-width="1.3"/><circle cx="368.4" cy="227" r="10.4" fill="#f4f41c" fill-opacity="0.86" stroke="#f4f41c" stroke-opacity="0.9" stroke-width="1.3"/><circle cx="391.5" cy="251.8" r="10.4" fill="#f4f41c" fill-opacity="0.86" stroke="#f4f41c" stroke-opacity="0.9" stroke-width="1.3"/><circle cx="405.1" cy="249.4" r="10.4" fill="#f4f41c" fill-opacity="0.86" stroke="#f4f41c" stroke-opacity="0.9" stroke-width="1.3"/><circle cx="412.3" cy="242.2" r="10.4" fill="#f4f41c" fill-opacity="0.86" stroke="#f4f41c" stroke-opacity="0.9" stroke-width="1.3"/><circle cx="428.3" cy="238.2" r="10.4" fill="#9e9e9e" fill-opacity="0.86" stroke="#9e9e9e" stroke-opacity="0.9" stroke-width="1.3"/><circle cx="413.9" cy="265.8" r="10.4" fill="#f4f41c" fill-opacity="0.86" stroke="#f4f41c" stroke-opacity="0.9" stroke-width="1.3"/><circle cx="414.4" cy="172.4" r="10.4" fill="#f4f41c" fill-opacity="0.86" stroke="#f4f41c" stroke-opacity="0.9" stroke-width="1.3"/><circle cx="434.4" cy="196.4" r="10.4" fill="#f4f41c" fill-opacity="0.86" stroke="#f4f41c" stroke-opacity="0.9" stroke-width="1.3"/><circle cx="449.6" cy="190.8" r="10.4" fill="#9e9e9e" fill-opacity="0.86" stroke="#9e9e9e" stroke-opacity="0.9" stroke-width="1.3"/><circle cx="445.6" cy="218.8" r="10.4" fill="#9e9e9e" fill-opacity="0.86" stroke="#9e9e9e" stroke-opacity="0.9" stroke-width="1.3"/><circle cx="413.7" cy="303" r="10.4" fill="#3ee41e" fill-opacity="0.86" stroke="#3ee41e" stroke-opacity="0.9" stroke-width="1.3"/><text x="335" y="163.9"></text><text x="6" y="268.9">N/A</text><text x="38.6" y="265.1">N/A</text><text x="27.3" y="281.5">57</text><text x="22" y="316.9">94</text><text x="192.8" y="206.7">N/A</text><text x="233.6" y="190.0">32</text><text x="223.2" y="185.2">126</text><text x="156.2" y="270.1">N/A</text><text x="168.6" y="263.6">N/A</text><text x="176.9" y="279.3">151</text><text x="184.3" y="279.3">N/A</text><text x="202" y="271.3">114</text><text x="194.4" y="277.4">56</text><text x="218.4" y="265.4">101</text><text x="206.4" y="290.7">N/A</text><text x="255.3" y="257.2">63</text><text x="269.2" y="271.0">70</text><text x="255.3" y="290.7">95</text><text x="264.5" y="293.1">33</text><text x="288.2" y="331.9">N/A</text><text x="262.8" y="219.8">N/A</text><text x="281.2" y="215.4">125</text><text x="271" y="244.2">148</text><text x="288" y="225.3">61</text><text x="285.5" y="236.4">101</text><text x="304" y="235.7">97</text><text x="296.6" y="232.7">N/A</text><text x="310.7" y="203.8">113</text><text x="332.7" y="193.4">175</text><text x="332.7" y="201.7">179</text><text x="344" y="188.4">118</text><text x="349.9" y="188.4">185</text><text x="339.3" y="213.9">N/A</text><text x="344.3" y="220.6">N/A</text><text x="350.4" y="227.2">262</text><text x="339.6" y="249.4">138</text><text x="328.9" y="236.6">156</text><text x="354" y="252.9">162</text><text x="358" y="263.0">162</text><text x="356.4" y="276.6">85</text><text x="380" y="239.3">159</text><text x="374.5" y="241.4">155</text><text x="368.4" y="229.4">73</text><text x="391.5" y="254.2">56</text><text x="405.1" y="251.8">69</text><text x="412.3" y="244.6">95</text><text x="428.3" y="240.6">N/A</text><text x="413.9" y="268.2">63</text><text x="414.4" y="174.8">55</text><text x="434.4" y="198.8">58</text><text x="449.6" y="193.2">N/A</text><text x="445.6" y="221.2">N/A</text><text x="413.7" y="305.4">38</text></g>
</svg>
<div id="popup" class="abs" style="left:300.9px;top:19.5px">
 <svg class="abs" style="left:27px;top:101px;overflow:visible" width="16" height="8"><path d="M1.5 0 L8.3 6.8 L15 0 Z" fill="#fff" style="filter:drop-shadow(0 1px 1px rgba(0,0,0,.25))"/></svg>
 <div style="position:absolute;left:0;top:0;width:119.4px;height:101.8px;background:#fff;border-radius:8px"></div>
 <div style="position:absolute;left:0;top:11px;width:119.4px;font-size:10.7px;line-height:10.8px">Bishkek<br>2021-11-10 6:00 PM<br>(LT)</div>
 <div style="position:absolute;left:11.2px;top:44.7px;width:96.6px;height:45.2px;background:#0b3f7a"></div>
 <div style="position:absolute;left:12.7px;top:46.2px;width:94px;height:20.7px;background:#004b87"></div>
 <div style="position:absolute;left:12.7px;top:67.4px;width:59.7px;height:21px;background:#fff"></div>
 <div style="position:absolute;left:73.4px;top:67.4px;width:34.4px;height:21px;background:#f00"></div>
 <div style="position:absolute;left:12.7px;top:50px;width:59.7px;text-align:center;font-size:10.7px;font-weight:bold;color:#fff">Pollutant</div>
 <div style="position:absolute;left:73.4px;top:50px;width:34.4px;text-align:center;font-size:10.7px;font-weight:bold;color:#fff">AQI</div>
 <div style="position:absolute;left:12.7px;top:72px;width:59.7px;text-align:center;font-size:10.7px;color:#333">PM2.5</div>
 <div style="position:absolute;left:73.4px;top:72px;width:34.4px;text-align:center;font-size:10.7px;font-weight:bold;color:#fff">158</div>
</div>
</div>

<div class="abs selh" style="top:4px">Select a City</div>
<div class="abs sel" style="top:31px">Bishkek<svg class="x" width="9" height="9" viewBox="0 0 9 9"><path d="M1.3 1.3 L7.7 7.7 M7.7 1.3 L1.3 7.7" stroke="#8c8c8c" stroke-width="1.1" fill="none"/></svg><span class="ar"></span></div>
<div class="abs selh" style="top:75px">Select a Parameter</div>
<div class="abs sel" style="top:101.5px">PM2.5<svg class="x" width="9" height="9" viewBox="0 0 9 9"><path d="M1.3 1.3 L7.7 7.7 M7.7 1.3 L1.3 7.7" stroke="#8c8c8c" stroke-width="1.1" fill="none"/></svg><span class="ar"></span></div>
<div id="cityb" class="abs">
 <div class="abs" style="left:7.5px;top:7px;font-size:10.7px;font-weight:bold;color:#333">Bishkek</div>
 <svg class="abs" style="left:214px;top:19px" width="27" height="26" viewBox="0 0 27 26">
  <rect width="27" height="26" fill="#f1b13b"/>
  <circle cx="6.5" cy="20" r="2.6" fill="#fff"/>
  <path d="M4 11.5 A10.5 10.5 0 0 1 14.5 22" fill="none" stroke="#fff" stroke-width="3"/>
  <path d="M4 5 A17 17 0 0 1 21 22" fill="none" stroke="#fff" stroke-width="3"/>
 </svg>
</div>
<div id="note" class="abs" style="white-space:nowrap">Note: Values above 500 are considered Beyond the AQI. Follow<br>recommendations for the Hazardous category. Additional<br>information on reducing exposure to extremely high levels of particle<br>pollution is available <b>here</b>.</div>

<div class="abs tab" style="left:8px;width:79.5px;background:#fff;border:1px solid #999;border-top:2px solid #0b3f7a;border-bottom:none;color:#333;padding-top:6px">AQI</div>
<div class="abs tab" style="left:90px;width:126px;background:#d3d3d3;color:#777">Concentration</div>
<div class="abs tab" style="left:218px;width:103.5px;background:#d3d3d3;color:#777">Historical</div>
<div class="abs" style="left:8px;top:378px;width:794px;height:1px;background:#a0a0a0"></div>
<div id="learn" class="abs">Learn more about how the Air Quality Index [AQI] is calculated from the EPA <b>here</b>.</div>

<div id="chart" class="abs">
<svg width="813" height="660" viewBox="0 0 813 660">
<text x="305" y="434.5" text-anchor="middle" style="font:13px 'Liberation Sans',sans-serif;fill:#333;letter-spacing:0.6px">Bishkek &#8211; PM2.5</text>
<text transform="translate(30.3,528) rotate(-90)" text-anchor="middle" style="font:9.3px 'Liberation Sans',sans-serif;fill:#333">AQI</text>
<text x="53.2" y="602.4" text-anchor="end" class="yl">0</text><line x1="64.1" x2="595.3" y1="572.8" y2="572.8" stroke="#e6e6e6" stroke-width="1"/><text x="53.2" y="575.0" text-anchor="end" class="yl">100</text><line x1="64.1" x2="595.3" y1="545.4" y2="545.4" stroke="#e6e6e6" stroke-width="1"/><text x="53.2" y="547.6" text-anchor="end" class="yl">200</text><line x1="64.1" x2="595.3" y1="518.0" y2="518.0" stroke="#e6e6e6" stroke-width="1"/><text x="53.2" y="520.2" text-anchor="end" class="yl">300</text><line x1="64.1" x2="595.3" y1="490.6" y2="490.6" stroke="#e6e6e6" stroke-width="1"/><text x="53.2" y="492.8" text-anchor="end" class="yl">400</text><line x1="64.1" x2="595.3" y1="463.2" y2="463.2" stroke="#e6e6e6" stroke-width="1"/><text x="53.2" y="465.4" text-anchor="end" class="yl">500</text><line x1="64.1" x2="595.3" y1="600.7" y2="600.7" stroke="#ccd6eb" stroke-width="1"/><line x1="64.1" x2="64.1" y1="600.2" y2="606.2" stroke="#ccd6eb" stroke-width="1"/><line x1="86.2" x2="86.2" y1="600.2" y2="606.2" stroke="#ccd6eb" stroke-width="1"/><line x1="108.4" x2="108.4" y1="600.2" y2="606.2" stroke="#ccd6eb" stroke-width="1"/><line x1="130.5" x2="130.5" y1="600.2" y2="606.2" stroke="#ccd6eb" stroke-width="1"/><line x1="152.6" x2="152.6" y1="600.2" y2="606.2" stroke="#ccd6eb" stroke-width="1"/><line x1="174.8" x2="174.8" y1="600.2" y2="606.2" stroke="#ccd6eb" stroke-width="1"/><line x1="196.9" x2="196.9" y1="600.2" y2="606.2" stroke="#ccd6eb" stroke-width="1"/><line x1="219.0" x2="219.0" y1="600.2" y2="606.2" stroke="#ccd6eb" stroke-width="1"/><line x1="241.2" x2="241.2" y1="600.2" y2="606.2" stroke="#ccd6eb" stroke-width="1"/><line x1="263.3" x2="263.3" y1="600.2" y2="606.2" stroke="#ccd6eb" stroke-width="1"/><line x1="285.4" x2="285.4" y1="600.2" y2="606.2" stroke="#ccd6eb" stroke-width="1"/><line x1="307.6" x2="307.6" y1="600.2" y2="606.2" stroke="#ccd6eb" stroke-width="1"/><line x1="329.7" x2="329.7" y1="600.2" y2="606.2" stroke="#ccd6eb" stroke-width="1"/><line x1="351.8" x2="351.8" y1="600.2" y2="606.2" stroke="#ccd6eb" stroke-width="1"/><line x1="374.0" x2="374.0" y1="600.2" y2="606.2" stroke="#ccd6eb" stroke-width="1"/><line x1="396.1" x2="396.1" y1="600.2" y2="606.2" stroke="#ccd6eb" stroke-width="1"/><line x1="418.2" x2="418.2" y1="600.2" y2="606.2" stroke="#ccd6eb" stroke-width="1"/><line x1="440.4" x2="440.4" y1="600.2" y2="606.2" stroke="#ccd6eb" stroke-width="1"/><line x1="462.5" x2="462.5" y1="600.2" y2="606.2" stroke="#ccd6eb" stroke-width="1"/><line x1="484.6" x2="484.6" y1="600.2" y2="606.2" stroke="#ccd6eb" stroke-width="1"/><line x1="506.8" x2="506.8" y1="600.2" y2="606.2" stroke="#ccd6eb" stroke-width="1"/><line x1="528.9" x2="528.9" y1="600.2" y2="606.2" stroke="#ccd6eb" stroke-width="1"/><line x1="551.0" x2="551.0" y1="600.2" y2="606.2" stroke="#ccd6eb" stroke-width="1"/><line x1="573.2" x2="573.2" y1="600.2" y2="606.2" stroke="#ccd6eb" stroke-width="1"/><line x1="595.3" x2="595.3" y1="600.2" y2="606.2" stroke="#ccd6eb" stroke-width="1"/><rect x="69.3" y="555.8" width="11.8" height="44.4" fill="#ff0000" stroke="#333" stroke-width="0.8"/><text class="xl" transform="translate(77.3,612.2) rotate(-45)" text-anchor="end">7 PM</text><rect x="91.4" y="555.8" width="11.8" height="44.4" fill="#ff0000" stroke="#333" stroke-width="0.8"/><text class="xl" transform="translate(99.4,612.2) rotate(-45)" text-anchor="end">8 PM</text><rect x="113.5" y="555.0" width="11.8" height="45.2" fill="#ff0000" stroke="#333" stroke-width="0.8"/><text class="xl" transform="translate(121.5,612.2) rotate(-45)" text-anchor="end">9 PM</text><rect x="135.7" y="552.2" width="11.8" height="48.0" fill="#ff0000" stroke="#333" stroke-width="0.8"/><text class="xl" transform="translate(143.7,612.2) rotate(-45)" text-anchor="end">10 PM</text><rect x="157.8" y="551.7" width="11.8" height="48.5" fill="#ff0000" stroke="#333" stroke-width="0.8"/><text class="xl" transform="translate(165.8,612.2) rotate(-45)" text-anchor="end">11 PM</text><rect x="179.9" y="552.2" width="11.8" height="48.0" fill="#ff0000" stroke="#333" stroke-width="0.8"/><text class="xl" transform="translate(187.9,612.2) rotate(-45)" text-anchor="end">Nov 10, 2021 12 AM</text><rect x="202.1" y="553.9" width="11.8" height="46.3" fill="#ff0000" stroke="#333" stroke-width="0.8"/><text class="xl" transform="translate(210.1,612.2) rotate(-45)" text-anchor="end">1 AM</text><rect x="224.2" y="555.3" width="11.8" height="44.9" fill="#ff0000" stroke="#333" stroke-width="0.8"/><text class="xl" transform="translate(232.2,612.2) rotate(-45)" text-anchor="end">2 AM</text><rect x="246.3" y="557.5" width="11.8" height="42.7" fill="#ff0000" stroke="#333" stroke-width="0.8"/><text class="xl" transform="translate(254.3,612.2) rotate(-45)" text-anchor="end">3 AM</text><rect x="268.5" y="562.1" width="11.8" height="38.1" fill="#ff7e00" stroke="#333" stroke-width="0.8"/><text class="xl" transform="translate(276.5,612.2) rotate(-45)" text-anchor="end">4 AM</text><rect x="290.6" y="568.4" width="11.8" height="31.8" fill="#ff7e00" stroke="#333" stroke-width="0.8"/><text class="xl" transform="translate(298.6,612.2) rotate(-45)" text-anchor="end">5 AM</text><rect x="312.7" y="573.9" width="11.8" height="26.3" fill="#ffff00" stroke="#333" stroke-width="0.8"/><text class="xl" transform="translate(320.7,612.2) rotate(-45)" text-anchor="end">6 AM</text><rect x="334.9" y="576.9" width="11.8" height="23.3" fill="#ffff00" stroke="#333" stroke-width="0.8"/><text class="xl" transform="translate(342.9,612.2) rotate(-45)" text-anchor="end">7 AM</text><rect x="357.0" y="581.3" width="11.8" height="18.9" fill="#ffff00" stroke="#333" stroke-width="0.8"/><text class="xl" transform="translate(365.0,612.2) rotate(-45)" text-anchor="end">8 AM</text><rect x="379.1" y="581.3" width="11.8" height="18.9" fill="#ffff00" stroke="#333" stroke-width="0.8"/><text class="xl" transform="translate(387.1,612.2) rotate(-45)" text-anchor="end">9 AM</text><rect x="401.3" y="580.7" width="11.8" height="19.5" fill="#ffff00" stroke="#333" stroke-width="0.8"/><text class="xl" transform="translate(409.3,612.2) rotate(-45)" text-anchor="end">10 AM</text><rect x="423.4" y="576.4" width="11.8" height="23.8" fill="#ffff00" stroke="#333" stroke-width="0.8"/><text class="xl" transform="translate(431.4,612.2) rotate(-45)" text-anchor="end">11 AM</text><rect x="445.5" y="568.7" width="11.8" height="31.5" fill="#ff7e00" stroke="#333" stroke-width="0.8"/><text class="xl" transform="translate(453.5,612.2) rotate(-45)" text-anchor="end">12 PM</text><rect x="467.7" y="559.6" width="11.8" height="40.6" fill="#ff7e00" stroke="#333" stroke-width="0.8"/><text class="xl" transform="translate(475.7,612.2) rotate(-45)" text-anchor="end">1 PM</text><rect x="489.8" y="556.1" width="11.8" height="44.1" fill="#ff0000" stroke="#333" stroke-width="0.8"/><text class="xl" transform="translate(497.8,612.2) rotate(-45)" text-anchor="end">2 PM</text><rect x="511.9" y="555.0" width="11.8" height="45.2" fill="#ff0000" stroke="#333" stroke-width="0.8"/><text class="xl" transform="translate(519.9,612.2) rotate(-45)" text-anchor="end">3 PM</text><rect x="534.1" y="555.0" width="11.8" height="45.2" fill="#ff0000" stroke="#333" stroke-width="0.8"/><text class="xl" transform="translate(542.1,612.2) rotate(-45)" text-anchor="end">4 PM</text><rect x="556.2" y="556.1" width="11.8" height="44.1" fill="#ff0000" stroke="#333" stroke-width="0.8"/><text class="xl" transform="translate(564.2,612.2) rotate(-45)" text-anchor="end">5 PM</text><rect x="578.3" y="557.2" width="11.8" height="43.0" fill="#ff0000" stroke="#333" stroke-width="0.8"/><text class="xl" transform="translate(586.3,612.2) rotate(-45)" text-anchor="end">6 PM</text>
</svg>
</div>

<div id="cc" class="abs">
 <div class="h"><div style="position:absolute;left:0;width:185px;top:5px;font-size:11.1px">Current Conditions</div>
 <div style="position:absolute;left:0;width:185px;top:22.5px;font-size:9px">observed at</div>
 <div style="position:absolute;left:0;width:185px;top:36.5px;font-size:11.2px">Nov 10, 2021 6:00 PM (LT)</div></div>
 <div class="r">158 AQI<br>Unhealthy<br>PM2.5</div>
 <div style="position:absolute;left:0;top:150px;width:185px;text-align:center;font-weight:bold;font-size:8.9px;color:#333">Health Message</div>
 <div style="position:absolute;left:3px;top:166px;width:184px;font-size:9.13px;line-height:16.05px;color:#333;white-space:nowrap">Everyone may begin to experience health<br>effects when AQI values are between 151<br>and 200. Members of sensitive groups may<br>experience more serious health effects.</div>
</div>
</body></html>
